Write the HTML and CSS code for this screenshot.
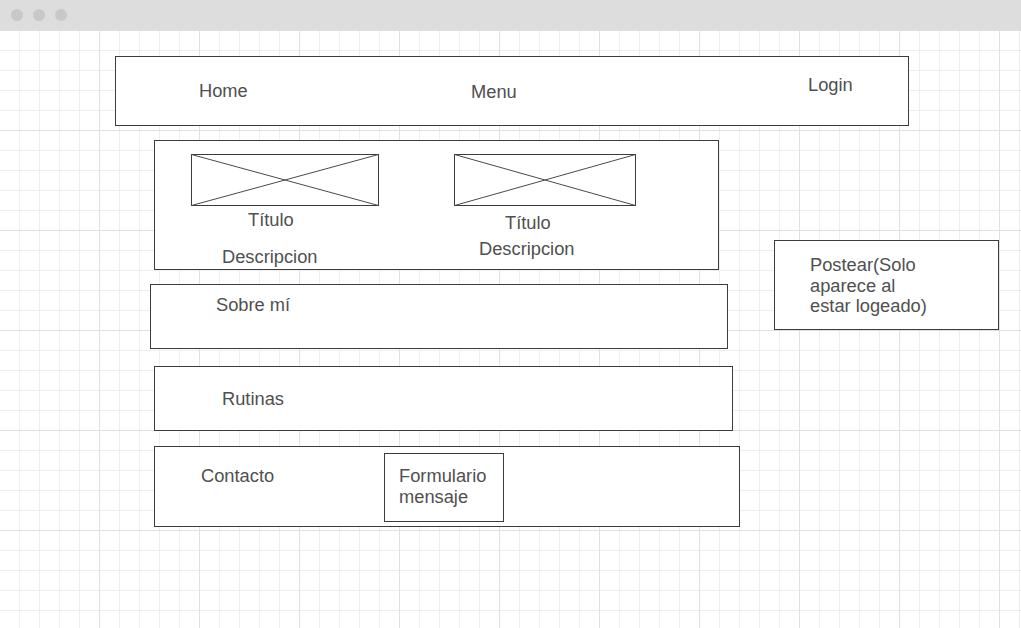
FILE: index.html
```html
<!DOCTYPE html>
<html lang="es">
<head>
  <meta charset="UTF-8">
  <title>Wireframe</title>
  <link rel="stylesheet" href="styles.css">
</head>
<body>
  <div class="titlebar">
    <span class="dot"></span>
    <span class="dot"></span>
    <span class="dot"></span>
  </div>

  <div class="canvas">
    <!-- boxes -->
    <div class="box box-header"></div>
    <div class="box box-posts"></div>
    <div class="box box-about"></div>
    <div class="box box-routines"></div>
    <div class="box box-contact"></div>
    <div class="box box-form"></div>
    <div class="box box-post"></div>

    <!-- image placeholders -->
    <svg class="placeholder ph-1" viewBox="0 0 188 52" preserveAspectRatio="none">
      <rect x="0.5" y="0.5" width="187" height="51" fill="#fff" stroke="#3c3c3c"></rect>
      <path d="M0.5 0.5L187.5 51.5M187.5 0.5L0.5 51.5" stroke="#4a4a4a" stroke-width="1" fill="none"></path>
    </svg>
    <svg class="placeholder ph-2" viewBox="0 0 182 52" preserveAspectRatio="none">
      <rect x="0.5" y="0.5" width="181" height="51" fill="#fff" stroke="#3c3c3c"></rect>
      <path d="M0.5 0.5L181.5 51.5M181.5 0.5L0.5 51.5" stroke="#4a4a4a" stroke-width="1" fill="none"></path>
    </svg>

    <!-- labels -->
    <span class="label l-home">Home</span>
    <span class="label l-menu">Menu</span>
    <span class="label l-login">Login</span>
    <span class="label l-title1">Título</span>
    <span class="label l-desc1">Descripcion</span>
    <span class="label l-title2">Título</span>
    <span class="label l-desc2">Descripcion</span>
    <span class="label l-about">Sobre mí</span>
    <span class="label l-routines">Rutinas</span>
    <span class="label l-contact">Contacto</span>
    <span class="label l-form">Formulario<br>mensaje</span>
    <span class="label l-post">Postear(Solo<br>aparece al<br>estar logeado)</span>
  </div>
</body>
</html>
```

FILE: styles.css
```css
body {
  margin: 0;
  width: 1021px;
  height: 628px;
  overflow: hidden;
  font-family: "Liberation Sans", Arial, sans-serif;
  background: #fff;
}
.titlebar {
  height: 30px;
  background-color: #dddddd;
  display: flex;
  align-items: center;
  gap: 10px;
  padding-left: 11px;
}
.dot {
  width: 12px;
  height: 12px;
  border-radius: 50%;
  background-color: #c8c8c8;
}
.canvas {
  position: relative;
  height: 598px;
  background-color: #fff;
  background-image:
    linear-gradient(to right, #e0e0e0 1px, transparent 1px),
    linear-gradient(to bottom, #e0e0e0 1px, transparent 1px),
    linear-gradient(to right, #eeeeee 1px, transparent 1px),
    linear-gradient(to bottom, #eeeeee 1px, transparent 1px);
  background-size: 100px 100px, 100px 100px, 20px 20px, 20px 20px;
  background-position: 99px 0, 0 0, 19px 0, 0 0;
}

/* diagram nodes: canvas coordinates, y measured from canvas top */
.box {
  position: absolute;
  box-sizing: border-box;
  border: 1px solid #3c3c3c;
  background-color: #fff;
}
.box-header   { left: 115px; top: 26px;  width: 794px; height: 70px; }
.box-posts    { left: 154px; top: 110px; width: 565px; height: 130px; }
.box-about    { left: 150px; top: 254px; width: 578px; height: 65px; }
.box-routines { left: 154px; top: 336px; width: 579px; height: 65px; }
.box-contact  { left: 154px; top: 416px; width: 586px; height: 81px; }
.box-form     { left: 384px; top: 423px; width: 120px; height: 69px; }
.box-post     { left: 774px; top: 210px; width: 225px; height: 90px; }

.placeholder {
  position: absolute;
  height: 52px;
}
.ph-1 { left: 191px; top: 124px; width: 188px; }
.ph-2 { left: 454px; top: 124px; width: 182px; }

.label {
  position: absolute;
  font-size: 18.3px;
  line-height: 20.7px;
  color: #505050;
  white-space: nowrap;
}
.l-home     { left: 199px; top: 51px; }
.l-menu     { left: 471px; top: 52px; }
.l-login    { left: 808px; top: 45px; }
.l-title1   { left: 248px; top: 180px; }
.l-desc1    { left: 222px; top: 217px; }
.l-title2   { left: 505px; top: 183px; }
.l-desc2    { left: 479px; top: 209px; }
.l-about    { left: 216px; top: 265px; }
.l-routines { left: 222px; top: 359px; }
.l-contact  { left: 201px; top: 436px; }
.l-form     { left: 399px; top: 436px; }
.l-post     { left: 810px; top: 225px; }
```
